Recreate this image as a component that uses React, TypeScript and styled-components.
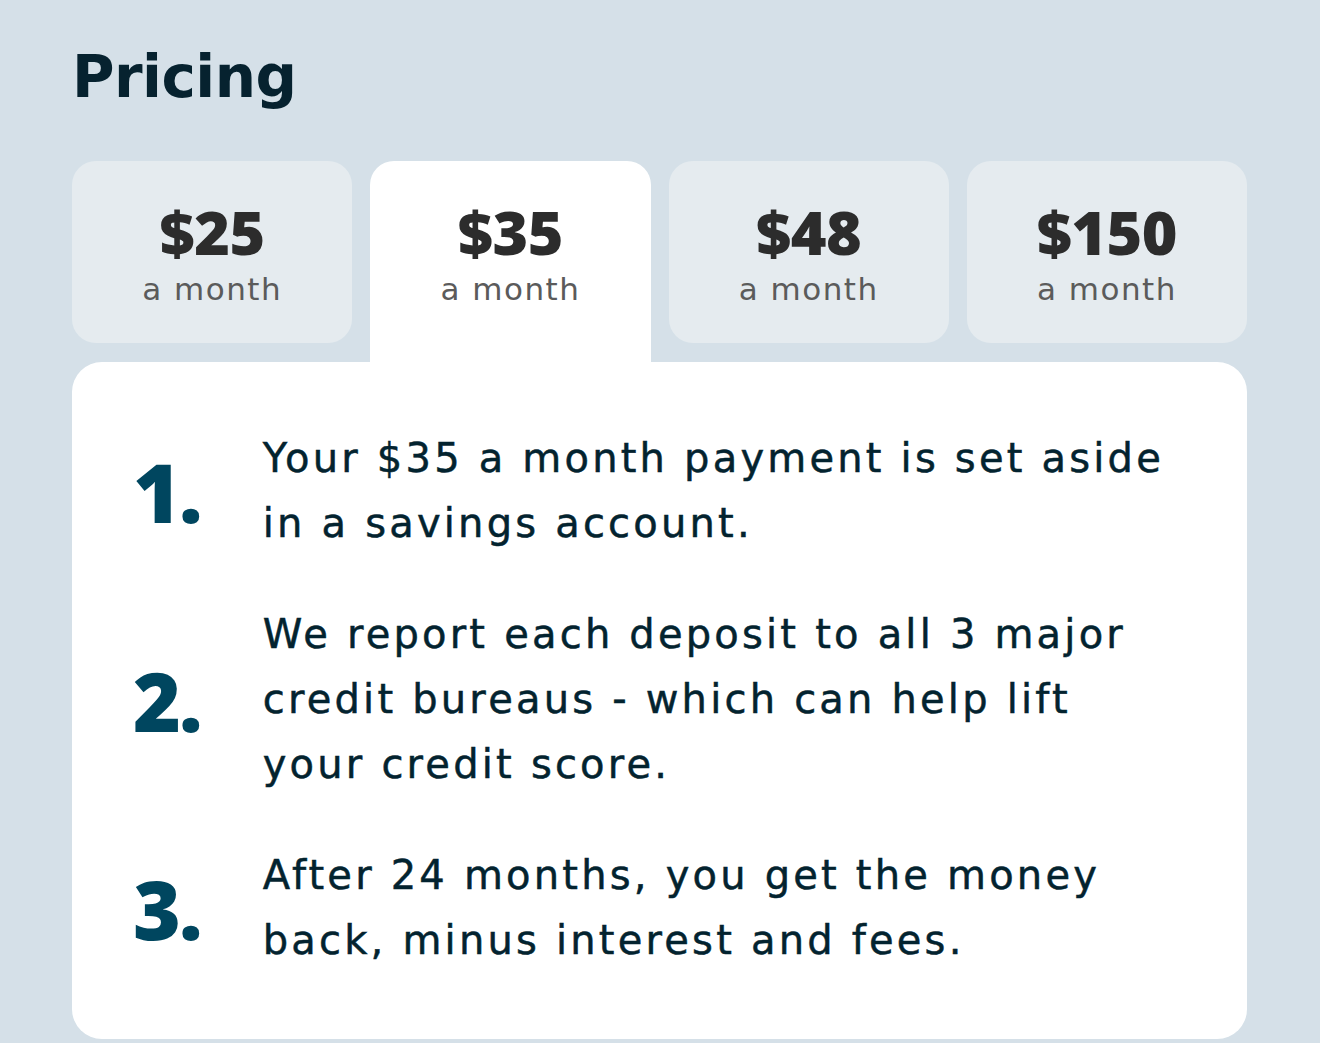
import styled, { createGlobalStyle } from 'styled-components';

const GlobalStyle = createGlobalStyle`
  body {
    margin: 0;
    background: #d5e0e8;
    font-family: 'DejaVu Sans', 'Open Sans', sans-serif;
  }
`;

const plans = [25, 35, 48, 150];
const active = 35;

const steps = [
  'Your $35 a month payment is set aside in a savings account.',
  'We report each deposit to all 3 major credit bureaus - which can help lift your credit score.',
  'After 24 months, you get the money back, minus interest and fees.',
];

const App = () => {
  return (
    <Page>
      <GlobalStyle />
      <Title>Pricing</Title>
      <Tabs>
        {plans.map((p) => (
          <Tab key={p} $active={p === active}>
            <Price>${p}</Price>
            <Period>a month</Period>
          </Tab>
        ))}
      </Tabs>
      <Card>
        {steps.map((s, i) => (
          <Step key={i}>
            <Num>{i + 1}.</Num>
            <StepText>{s}</StepText>
          </Step>
        ))}
      </Card>
    </Page>
  );
};

export default App;

const Page = styled.main`
  padding: 48px 73px 0 72px;
`;

const Title = styled.h1`
  margin: 0 0 55px;
  font-size: 58px;
  line-height: 1;
  font-weight: 700;
  letter-spacing: -0.5px;
  color: #06222f;
`;

const Tabs = styled.div`
  display: flex;
  align-items: flex-start;
  gap: 18px;
`;

const Tab = styled.div<{ $active?: boolean }>`
  flex: 1;
  height: ${(p) => (p.$active ? '201px' : '182px')};
  padding-top: 40px;
  box-sizing: border-box;
  display: flex;
  flex-direction: column;
  align-items: center;
  background: ${(p) => (p.$active ? '#ffffff' : '#e5ebef')};
  border-radius: ${(p) => (p.$active ? '24px 24px 0 0' : '24px')};
`;

const Price = styled.div`
  font-family: 'Open Sans', sans-serif;
  font-size: 61px;
  line-height: 1;
  font-weight: 800;
  letter-spacing: -0.5px;
  color: #2c2c2c;
`;

const Period = styled.div`
  margin-top: 12px;
  font-size: 31px;
  line-height: 1;
  letter-spacing: 1.5px;
  color: #5b5b5b;
`;

const Card = styled.section`
  background: #ffffff;
  border-radius: 30px;
  padding: 64px 60px 66px 61px;
  display: flex;
  flex-direction: column;
  gap: 46px;
`;

const Step = styled.div`
  display: flex;
  align-items: center;
  gap: 62px;
`;

const Num = styled.div`
  font-family: 'Open Sans', sans-serif;
  font-size: 82px;
  line-height: 1;
  font-weight: 800;
  letter-spacing: -2px;
  color: #00465f;
`;

const StepText = styled.p`
  margin: 0;
  max-width: 910px;
  font-size: 40px;
  line-height: 65px;
  letter-spacing: 3.2px;
  -webkit-text-stroke: 0.5px #03232f;
  color: #03232f;
`;
